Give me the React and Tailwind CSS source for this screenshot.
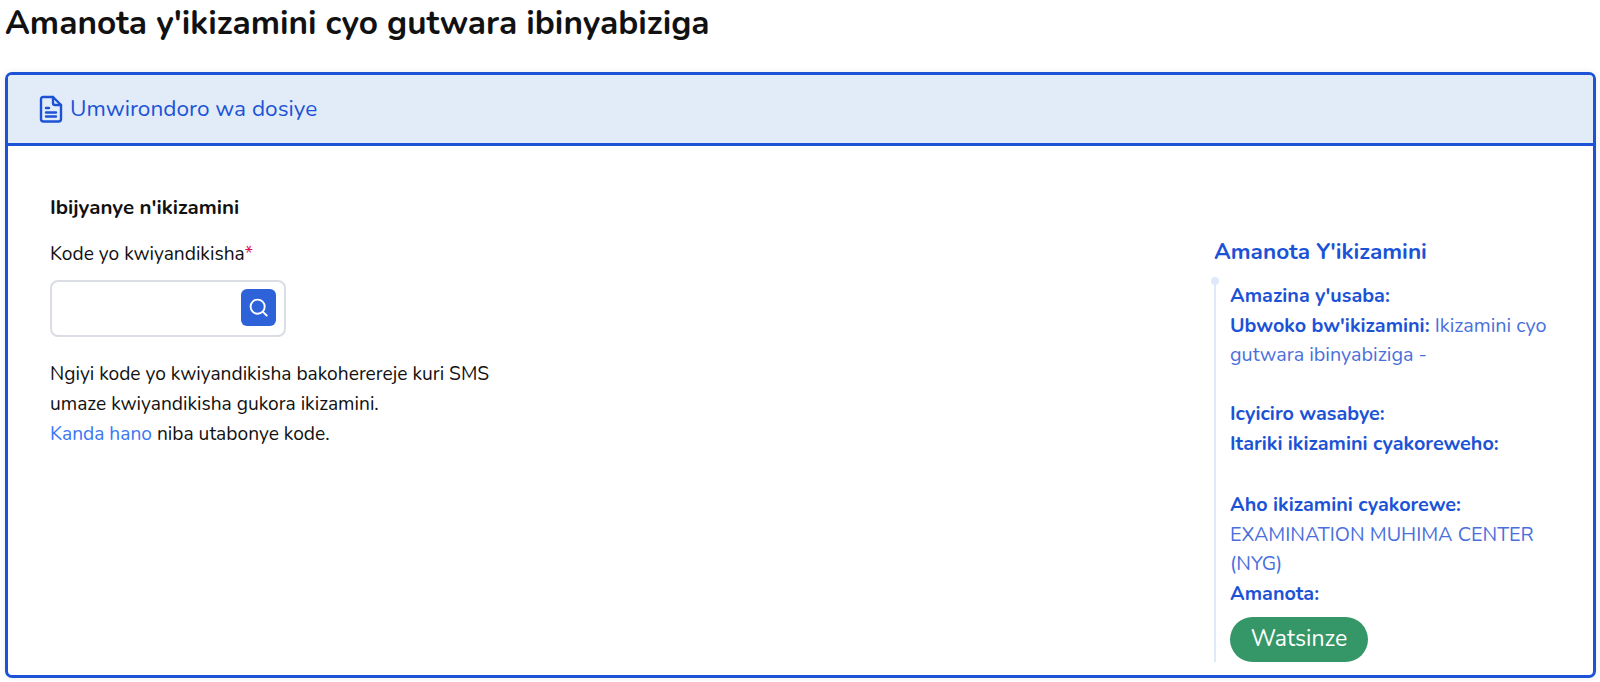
import React from "react";

function DocIcon() {
  return (
    <svg width="24" height="28" viewBox="0 0 24 28" fill="none" stroke="#1c53d6" strokeWidth="2.4" strokeLinecap="round" strokeLinejoin="round">
      <path d="M4 2h10l8 8v14a2.5 2.5 0 0 1-2.5 2.5h-15A2.5 2.5 0 0 1 2 24V4a2 2 0 0 1 2-2z" />
      <path d="M14 2v6a2 2 0 0 0 2 2h6" />
      <path d="M7 13h3M7 17.5h10M7 21.5h10" />
    </svg>
  );
}

function SearchIcon() {
  return (
    <svg width="21" height="21" viewBox="0 0 20 20" fill="none" stroke="#ffffff" strokeWidth="1.8" strokeLinecap="round">
      <circle cx="9.2" cy="9.2" r="6.7" />
      <path d="M14.2 14.2l3.6 3.4" />
    </svg>
  );
}

function Row({ children, className = "" }) {
  return <div className={`leading-[29.6px] ${className}`}>{children}</div>;
}

export default function App() {
  return (
    <div className="h-[682px] overflow-hidden bg-white font-['Nunito','Lato',sans-serif] text-[19.2px] text-[#111]">
      <h1 className="pl-[5px] text-[33.4px] font-bold leading-[46px] text-[#111]">
        Amanota y'ikizamini cyo gutwara ibinyabiziga
      </h1>
      <div className="mx-[5px] mt-[26px] flex h-[606px] w-[1591px] flex-col overflow-hidden rounded-[7px] border-[3px] border-[#1c53d6] bg-white shadow-[0_0_6px_rgba(0,0,0,0.08)]">
        <div className="flex h-[71px] shrink-0 items-center gap-[7px] border-b-[3px] border-[#1c53d6] bg-[#e1ecf8] pl-[31px] text-[#1c53d6]">
          <DocIcon />
          <span className="text-[22.6px] leading-none">Umwirondoro wa dosiye</span>
        </div>
        <div className="flex flex-1 justify-between pl-[42px]">
          <div className="w-[480px] pt-[46px]">
            <h2 className="text-[20.5px] font-bold leading-[30px]">Ibijyanye n'ikizamini</h2>
            <div className="mt-[17px] leading-[30px]">
              Kode yo kwiyandikisha<span className="text-[#e0134f]">*</span>
            </div>
            <div className="mt-[11px] flex h-[57px] w-[236px] items-center justify-end rounded-[8px] border-2 border-[#dadde3] pr-[8px]">
              <button className="mb-[3px] flex h-[37px] w-[35px] items-center justify-center rounded-[6px] bg-[#2e62d9]">
                <SearchIcon />
              </button>
            </div>
            <p className="mt-[22px] leading-[30px]">
              Ngiyi kode yo kwiyandikisha bakoherereje kuri SMS
              <br />
              umaze kwiyandikisha gukora ikizamini.
              <br />
              <a className="text-[#3b76f6]">Kanda hano</a> niba utabonye kode.
            </p>
          </div>
          <div className="w-[379px] pt-[86px] text-[19.8px] text-[#1c53d6]">
            <h3 className="text-[22.6px] font-bold leading-[40px]">Amanota Y'ikizamini</h3>
            <div className="relative mt-[15px] border-l-2 border-[#dfe9fa] pl-[14px]">
              <span className="absolute left-[-5px] top-[-4px] h-[8px] w-[8px] rounded-full bg-[#dfe9fa]" />
              <div className="-mt-[6px] w-[336px]">
                <Row><b>Amazina y'usaba:</b></Row>
                <Row><b>Ubwoko bw'ikizamini:</b> <span className="text-[#4a6fdc]">Ikizamini cyo gutwara ibinyabiziga -</span></Row>
                <Row>&nbsp;</Row>
                <Row><b>Icyiciro wasabye:</b></Row>
                <Row><b>Itariki ikizamini cyakoreweho:</b></Row>
                <Row>&nbsp;</Row>
                <Row className="mt-[2px]"><b>Aho ikizamini cyakorewe:</b></Row>
                <Row className="text-[#4a6fdc]">EXAMINATION MUHIMA CENTER (NYG)</Row>
                <Row><b>Amanota:</b></Row>
              </div>
              <div className="mt-[8px] -mb-[6px] flex h-[45px] w-[138px] items-center justify-center rounded-full bg-[#359768] text-[23px] text-white">
                Watsinze
              </div>
            </div>
          </div>
        </div>
      </div>
    </div>
  );
}
